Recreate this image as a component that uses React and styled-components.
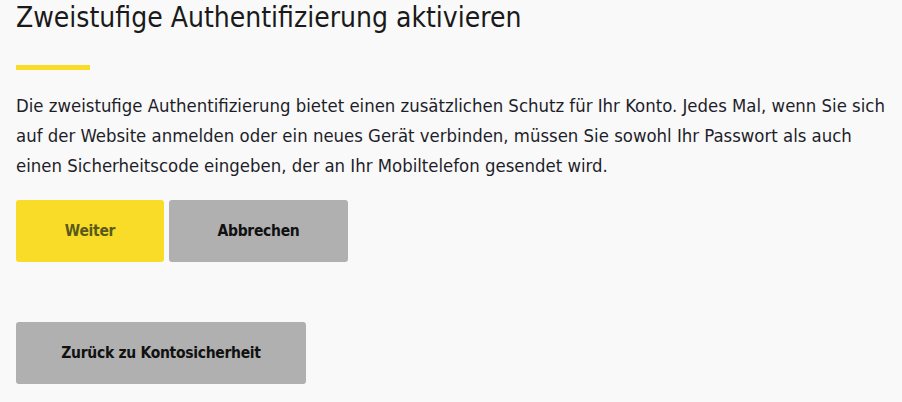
import React from "react";
import styled, { createGlobalStyle } from "styled-components";

const Global = createGlobalStyle`
  html, body { margin: 0; padding: 0; background: #f9f9f9; }
  body { font-family: "DejaVu Sans Condensed", "Roboto", sans-serif; color: #1b1b1b; }
`;

const Page = styled.div`
  padding: 0 16px;
  display: flex;
  flex-direction: column;
`;

const Title = styled.h1`
  margin: 0;
  font-weight: 400;
  font-size: 28px;
  line-height: 36px;
  color: #1a1a1a;
`;

const Accent = styled.div`
  width: 74px;
  height: 5px;
  background: #f8dc27;
  margin-top: 29px;
`;

const Text = styled.p`
  margin: 21px 0 0;
  font-size: 18.4px;
  line-height: 30px;
  color: #1e1e2a;
  white-space: nowrap;
`;

const Row = styled.div`
  display: flex;
  gap: 5px;
  margin-top: ${(p) => p.$top}px;
`;

const Button = styled.button`
  width: ${(p) => p.$w}px;
  height: 62px;
  border: none;
  border-radius: 3px;
  font-family: inherit;
  font-weight: 700;
  font-size: 15.5px;
  letter-spacing: -0.3px;
  background: ${(p) => (p.$primary ? "#f8dc27" : "#b0b0b0")};
  color: ${(p) => (p.$primary ? "#5a5a1c" : "#111")};
  padding: 0;
  cursor: pointer;
`;

export default function App() {
  return (
    <>
      <Global />
      <Page>
        <Title>Zweistufige Authentifizierung aktivieren</Title>
        <Accent />
        <Text>
          Die zweistufige Authentifizierung bietet einen zusätzlichen Schutz für Ihr Konto. Jedes Mal, wenn Sie sich
          <br />
          auf der Website anmelden oder ein neues Gerät verbinden, müssen Sie sowohl Ihr Passwort als auch
          <br />
          einen Sicherheitscode eingeben, der an Ihr Mobiltelefon gesendet wird.
        </Text>
        <Row $top={19}>
          <Button $primary $w={148}>Weiter</Button>
          <Button $w={179}>Abbrechen</Button>
        </Row>
        <Row $top={60}>
          <Button $w={290}>Zurück zu Kontosicherheit</Button>
        </Row>
      </Page>
    </>
  );
}
